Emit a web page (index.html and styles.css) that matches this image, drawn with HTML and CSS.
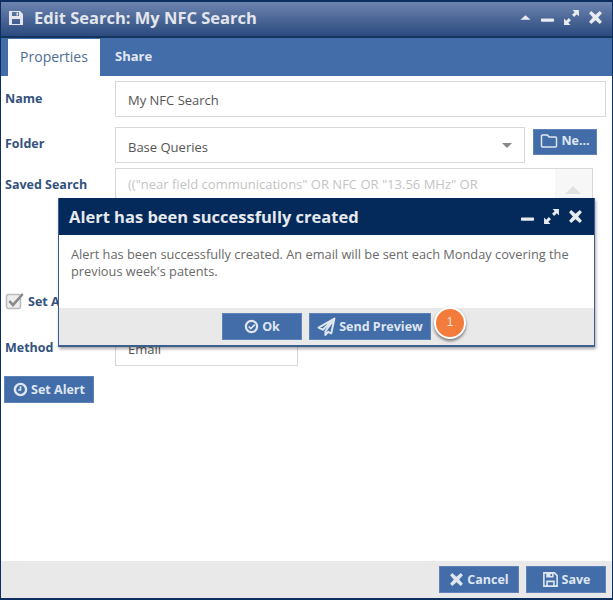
FILE: index.html
```html
<!DOCTYPE html>
<html lang="en">
<head>
    <meta charset="UTF-8">
    <meta name="viewport" content="width=device-width, initial-scale=1.0">
    <title>Edit Search</title>
    <link rel="stylesheet" href="styles.css">
</head>
<body>
    <div class="window">
        <div class="window-title">
            <svg class="title-icon" viewBox="0 0 16 16"><path fill-rule="evenodd" d="M1 1h11l3 3v11H1zM4 2v4h7V2zM8.500 2.600h1.600v2.800H8.500zM4 9v5h8V9z"/></svg>
            <span class="title-text">Edit Search: My NFC Search</span>
            <div class="window-controls">
                <svg class="ctl-up" viewBox="0 0 14 14"><path d="M1.500 9.500 7 4.500l5.500 5z"/></svg>
                <svg viewBox="0 0 16 14"><rect x="1" y="8" width="14" height="3.500" rx="1"/></svg>
                <svg class="ctl-expand" viewBox="0 0 16 16"><path d="M9 1h6v6l-2-2-2.500 2.500-2-2L11 3zM7 15H1V9l2 2 2.500-2.500 2 2L5 13z"/></svg>
                <svg viewBox="0 0 14 14"><path d="M3 1l4 3.500L11 1l2 2-3.500 4L13 11l-2 2-4-3.500L3 13l-2-2 3.500-4L1 3z"/></svg>
            </div>
        </div>

        <div class="tabs">
            <div class="tab active">Properties</div>
            <div class="tab">Share</div>
        </div>

        <div class="form">
            <div class="form-row name-row">
                <label>Name</label>
                <div class="field grow">My NFC Search</div>
            </div>
            <div class="form-row folder-row">
                <label>Folder</label>
                <div class="field grow select">Base Queries<span class="caret"></span></div>
                <button class="btn new-btn">
                    <svg class="icon" viewBox="0 0 18 16"><path fill="none" stroke="currentColor" stroke-width="1.500" d="M2.500 2h5l1.500 2h6.500a1 1 0 0 1 1 1v8a1 1 0 0 1-1 1h-13a1 1 0 0 1-1-1V3a1 1 0 0 1 1-1z"/></svg>
                    Ne...
                </button>
            </div>
            <div class="form-row saved-row">
                <label>Saved Search</label>
                <div class="field query">
                    <span>(("near field communications" OR NFC OR "13.56 MHz" OR</span>
                    <div class="scrollbar"><span class="scroll-up"></span></div>
                </div>
            </div>
            <div class="check-row">
                <svg class="check" viewBox="0 0 20 20"><rect x="1.500" y="3.500" width="14" height="14" rx="2" fill="#eee" stroke="#bbb" stroke-width="1.500"/><path d="M5 9l3 3 9-10 1.500 2L8 16 3.500 11z" fill="#8a8a8a"/></svg>
                <label>Set Alert</label>
            </div>
            <div class="form-row method-row">
                <label>Method</label>
                <div class="field method select">Email<span class="caret small"></span></div>
            </div>
            <button class="btn alert-btn">
                <svg class="icon" viewBox="0 0 16 16"><circle cx="8" cy="8" r="6" fill="none" stroke="currentColor" stroke-width="2.600"/><path d="M8 4.500V8.500H5.500" fill="none" stroke="currentColor" stroke-width="1.800"/></svg>
                Set Alert
            </button>
        </div>

        <div class="window-footer">
            <button class="btn footer-btn">
                <svg class="icon" viewBox="0 0 14 14"><path fill="currentColor" d="M3 1l4 3.500L11 1l2 2-3.500 4L13 11l-2 2-4-3.500L3 13l-2-2 3.500-4L1 3z"/></svg>
                Cancel
            </button>
            <button class="btn footer-btn">
                <svg class="icon save-icon" viewBox="0 0 16 16"><path fill="currentColor" fill-rule="evenodd" d="M1 1h11l3 3v11H1zM2.500 2.500v11h1.500V9h8v4.500h1.500V4.600L11.400 2.500H11V6H4V2.500zM5.500 10.500v3h5v-3zM8 2.800h1.500v2H8z"/></svg>
                Save
            </button>
        </div>
    </div>

    <!-- alert dialog on top of the form -->
    <div class="dialog">
        <div class="dialog-title">
            <span class="dialog-title-text">Alert has been successfully created</span>
            <div class="window-controls">
                <svg viewBox="0 0 16 14"><rect x="1" y="8" width="14" height="3.500" rx="1"/></svg>
                <svg class="ctl-expand" viewBox="0 0 16 16"><path d="M9 1h6v6l-2-2-2.500 2.500-2-2L11 3zM7 15H1V9l2 2 2.500-2.500 2 2L5 13z"/></svg>
                <svg viewBox="0 0 14 14"><path d="M3 1l4 3.500L11 1l2 2-3.500 4L13 11l-2 2-4-3.500L3 13l-2-2 3.500-4L1 3z"/></svg>
            </div>
        </div>
        <div class="dialog-body">Alert has been successfully created. An email will be sent each Monday covering the previous week's patents.</div>
        <div class="dialog-footer">
            <button class="btn ok-btn">
                <svg class="icon" viewBox="0 0 16 16"><circle cx="8" cy="8" r="6" fill="none" stroke="currentColor" stroke-width="2.400"/><path d="M5 8l2.300 2.300L11.500 6" fill="none" stroke="currentColor" stroke-width="1.800"/></svg>
                Ok
            </button>
            <button class="btn preview-btn">
                <svg class="icon plane" viewBox="0 0 18 18"><path fill="none" stroke="currentColor" stroke-width="1.900" stroke-linejoin="round" d="M16.500 1.500 1.500 10l4 2 11-10.500L8 13.500V17l2.500-3 3 1.500z"/></svg>
                Send Preview
            </button>
        </div>
    </div>

    <div class="badge">1</div>
</body>
</html>
```

FILE: styles.css
```css
html, body {
    margin: 0;
    padding: 0;
    background-color: #fff;
    overflow: hidden;
}
body {
    width: 613px;
    height: 600px;
    position: relative;
    font-family: "Open Sans", "Noto Sans", sans-serif;
    font-size: 13px;
}
.window {
    box-sizing: border-box;
    width: 613px;
    height: 600px;
    display: flex;
    flex-direction: column;
    border: solid #0c2f60;
    border-width: 2px 1px 2px 1px;
}
.window-title {
    flex: none;
    display: flex;
    align-items: center;
    height: 31px;
    padding: 0 9px 3px 7px;
    background: linear-gradient(#6d84b0, #2b4a7e);
    border-bottom: 2px solid #12345f;
    color: #e3e6ec;
}
.title-icon {
    width: 16px;
    height: 16px;
    fill: #e3e6ec;
    margin-right: 10px;
}
.title-text {
    font-size: 16.500px;
    font-weight: 700;
}
.window-controls {
    margin-left: auto;
    display: flex;
    align-items: center;
    gap: 8px;
}
.window-controls svg {
    width: 15px;
    height: 15px;
    fill: #e8ebf0;
}
.window-controls .ctl-expand {
    width: 17px;
    height: 17px;
}
.window-controls .ctl-up {
    width: 13px;
    height: 13px;
}
.tabs {
    height: 38px;
    flex: none;
    display: flex;
    align-items: flex-end;
    padding-left: 7px;
    background-color: #426da9;
    box-sizing: border-box;
    padding-top: 1px;
}
.tab {
    height: 37px;
    box-sizing: border-box;
    padding: 0 11px;
    line-height: 35px;
    font-size: 13px;
    font-weight: 700;
    color: #e3e8f0;
}
.tab.active {
    width: 92px;
    background-color: #fff;
    color: #4f6d96;
    font-size: 14px;
    font-weight: 400;
    text-align: center;
    padding: 0;
    margin-right: 4px;
}
.form {
    flex: 1;
    padding: 5px 6px 0 4px;
    color: #555;
}
.form-row {
    display: flex;
    align-items: flex-start;
}
label {
    color: #33527d;
    font-size: 12.500px;
    font-weight: 700;
}
.form-row label {
    width: 110px;
    flex: none;
}
.field {
    box-sizing: border-box;
    border: 1px solid #d8d8d8;
    background-color: #fff;
    padding-left: 12px;
    position: relative;
    font-size: 13px;
}
.grow {
    flex: 1;
}
.name-row {
    height: 46px;
}
.name-row label {
    padding-top: 9px;
}
.name-row .field {
    height: 36px;
    line-height: 37px;
}
.folder-row {
    height: 41px;
}
.folder-row label {
    padding-top: 8px;
}
.folder-row .field {
    height: 36px;
    line-height: 38px;
}
.caret {
    position: absolute;
    right: 12px;
    top: 15px;
    border-style: solid;
    border-width: 5px 5px 0 5px;
    border-color: #888 transparent transparent;
}
.caret.small {
    right: 14px;
    top: 14px;
    border-width: 3px 3px 0 3px;
}
.new-btn {
    width: 64px;
    height: 26px;
    margin: 2px 9px 0 8px;
    flex: none;
    padding: 0 0 3px;
    font-size: 12px;
}
.saved-row {
    height: 121px;
}
.saved-row label {
    padding-top: 8px;
}
.query {
    width: 478px;
    height: 100px;
    padding-top: 6px;
    color: #c4c4c4;
    font-size: 13px;
    overflow: hidden;
}
.scrollbar {
    position: absolute;
    top: 0;
    right: 0;
    bottom: 0;
    width: 37px;
    background-color: #f7f7f7;
}
.scroll-up {
    position: absolute;
    left: 10px;
    top: 17px;
    border-style: solid;
    border-width: 0 8px 8px 8px;
    border-color: transparent transparent #e2e2e2;
}
.check-row {
    display: flex;
    align-items: center;
    gap: 3px;
    height: 24px;
    margin-bottom: 16px;
}
.check {
    width: 20px;
    height: 20px;
}
.method-row {
    height: 47px;
}
.method-row label {
    padding-top: 10px;
}
.method {
    width: 183px;
    height: 38px;
    margin-top: -1px;
    padding-top: 11px;
}
.btn {
    display: inline-flex;
    align-items: center;
    justify-content: center;
    gap: 3px;
    border: 1px solid #5d83b8;
    background-color: #426da9;
    color: #dfe6f0;
    font-family: "Open Sans", "Noto Sans", sans-serif;
    font-size: 12.500px;
    font-weight: 700;
}
.icon {
    width: 15px;
    height: 15px;
    flex: none;
}
.new-btn .icon {
    width: 18px;
    height: 16px;
}
.alert-btn {
    width: 90px;
    height: 27px;
    margin-left: -1px;
    padding: 0;
}
.window-footer {
    height: 37px;
    flex: none;
    display: flex;
    justify-content: flex-end;
    align-items: flex-start;
    gap: 7px;
    padding: 5px 6px 0 0;
    box-sizing: border-box;
    background-color: #e9e9e9;
}
.footer-btn {
    width: 80px;
    height: 27px;
    padding: 0;
}
.save-icon {
    width: 17px;
    height: 17px;
}
.dialog {
    position: absolute;
    left: 58px;
    top: 198px;
    width: 537px;
    height: 149px;
    box-sizing: border-box;
    display: flex;
    flex-direction: column;
    border: solid #3c5f8f;
    border-width: 0 1px 2px 1px;
    box-shadow: 1px 2px 3px rgba(0, 0, 0, 0.35);
    background-color: #fff;
}
.dialog-title {
    height: 37px;
    flex: none;
    display: flex;
    align-items: center;
    padding: 0 11px 0 10px;
    background-color: #032a5a;
    color: #e6e9ee;
}
.dialog-title-text {
    font-size: 16.500px;
    font-weight: 700;
}
.dialog-body {
    flex: 1;
    padding: 11px 12px 0 12px;
    color: #6a6a6a;
    font-size: 12.800px;
    line-height: 17px;
}
.dialog-footer {
    height: 37px;
    flex: none;
    display: flex;
    gap: 7px;
    padding: 5px 0 0 163px;
    box-sizing: border-box;
    background-color: #e9e9e9;
}
.ok-btn {
    width: 80px;
    height: 27px;
    padding: 0;
}
.preview-btn {
    width: 122px;
    height: 27px;
    padding: 0;
}
.plane {
    width: 19px;
    height: 19px;
}
.badge {
    position: absolute;
    left: 434px;
    top: 307px;
    width: 28px;
    height: 28px;
    border: 2px solid #fff;
    border-radius: 50%;
    background-color: #f37c3c;
    box-shadow: 0 2px 3px rgba(0, 0, 0, 0.5);
    color: #fde3d3;
    font-family: "Liberation Sans", sans-serif;
    font-size: 12px;
    line-height: 26px;
    text-align: center;
}
```
